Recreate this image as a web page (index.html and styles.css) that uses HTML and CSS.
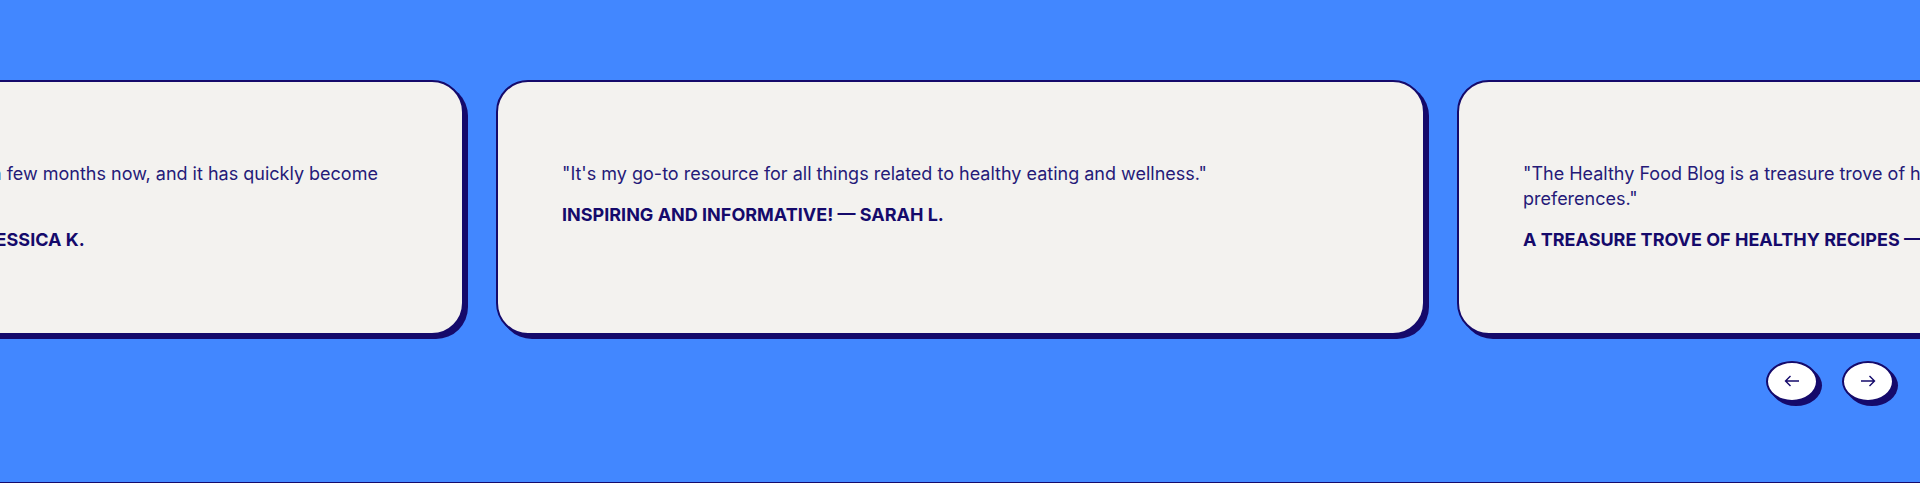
FILE: index.html
```html
<!DOCTYPE html>
<html lang="en">
<head>
<meta charset="utf-8">
<title>Testimonials</title>
<link rel="stylesheet" href="styles.css">
</head>
<body>
<section class="testimonials">
  <div class="viewport">
    <div class="track">
      <article class="card">
        <p class="quote">"I've been enjoying the Healthy Food Blog for a few months now, and it has quickly become one of my favorite resources."</p>
        <p class="author">A must-read for every food lover! — Jessica K.</p>
      </article>
      <article class="card">
        <p class="quote">"It's my go-to resource for all things related to healthy eating and wellness."</p>
        <p class="author">Inspiring and informative! — Sarah L.</p>
      </article>
      <article class="card">
        <p class="quote">"The Healthy Food Blog is a treasure trove of healthy recipes that cater to dietary needs and preferences."</p>
        <p class="author">A treasure trove of healthy recipes — Michael R.</p>
      </article>
    </div>
  </div>
  <div class="controls">
    <button class="nav-btn" type="button" aria-label="Previous">
      <svg width="16" height="12" viewBox="0 0 16 12"><path d="M15 6H1.5M6.5 1L1.5 6l5 5" fill="none" stroke="#150a6b" stroke-width="1.4"/></svg>
    </button>
    <button class="nav-btn" type="button" aria-label="Next">
      <svg width="16" height="12" viewBox="0 0 16 12"><path d="M1 6h13.5M9.5 1l5 5-5 5" fill="none" stroke="#150a6b" stroke-width="1.4"/></svg>
    </button>
  </div>
</section>
</body>
</html>
```
FILE: styles.css
```css
* { box-sizing: border-box; }
html, body { margin: 0; padding: 0; }
body {
  font-family: Inter, "Noto Sans", sans-serif;
  background: #4287ff;
}
.testimonials {
  background: #4287ff;
  height: 483px;
  padding-top: 80px;
  border-bottom: 1px solid #150a6b;
  overflow: hidden;
}
.viewport {
  overflow: hidden;
  padding-bottom: 6px;
}
.track {
  display: flex;
  gap: 32px;
  transform: translateX(-465px);
}
.card {
  flex: 0 0 929px;
  background: #f3f2ef;
  border: 2px solid #150a6b;
  border-radius: 32px;
  box-shadow: 4px 4px 0 #150a6b;
  padding: 63px 64px 64px;
}
.card p { margin: 16px 0; }
.quote {
  font-size: 18px;
  line-height: 1.4;
  color: #251a78;
}
.author {
  font-size: 18px;
  line-height: 1.4;
  font-weight: 700;
  text-transform: uppercase;
  color: #150a6b;
}
.controls {
  display: flex;
  justify-content: flex-end;
  gap: 24px;
  padding: 20px 26px 0 0;
}
.nav-btn {
  width: 52px;
  height: 41px;
  border: 2px solid #150a6b;
  border-radius: 50%;
  background: #ffffff;
  box-shadow: 4px 4px 0 #150a6b;
  display: flex;
  align-items: center;
  justify-content: center;
  padding: 0;
  cursor: pointer;
}
```
